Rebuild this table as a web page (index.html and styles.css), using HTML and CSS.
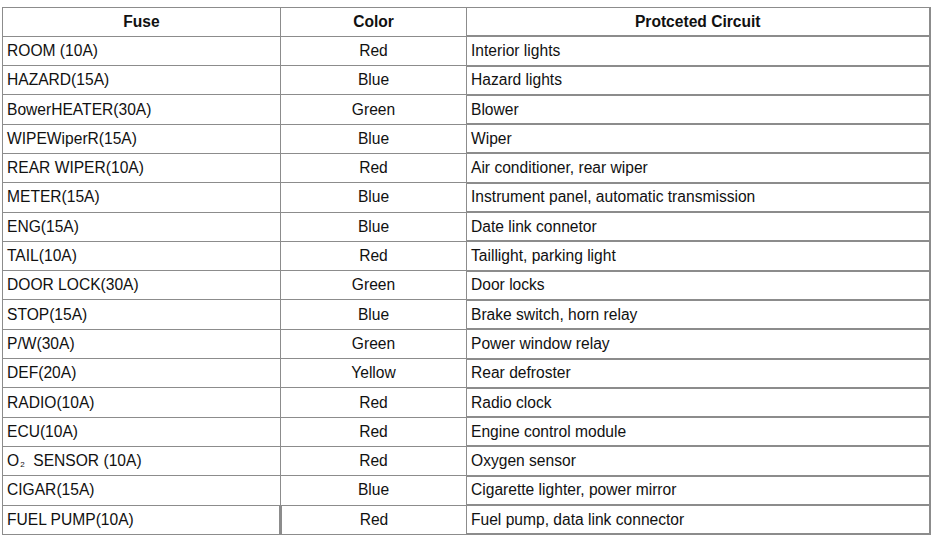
FILE: index.html
```html
<!DOCTYPE html>
<html>
<head>
<meta charset="utf-8">
<link rel="stylesheet" href="styles.css">
</head>
<body>
<table class="fuse-table">
  <colgroup>
    <col class="c1"><col class="c2"><col class="c3">
  </colgroup>
  <thead>
    <tr><th>Fuse</th><th>Color</th><th class="circ">Protceted Circuit</th></tr>
  </thead>
  <tbody>
    <tr><td>ROOM (10A)</td><td class="col">Red</td><td class="circ">Interior lights</td></tr>
    <tr><td>HAZARD(15A)</td><td class="col">Blue</td><td class="circ">Hazard lights</td></tr>
    <tr><td>BowerHEATER(30A)</td><td class="col">Green</td><td class="circ">Blower</td></tr>
    <tr><td>WIPEWiperR(15A)</td><td class="col">Blue</td><td class="circ">Wiper</td></tr>
    <tr><td>REAR WIPER(10A)</td><td class="col">Red</td><td class="circ">Air conditioner, rear wiper</td></tr>
    <tr><td>METER(15A)</td><td class="col">Blue</td><td class="circ">Instrument panel, automatic transmission</td></tr>
    <tr><td>ENG(15A)</td><td class="col">Blue</td><td class="circ">Date link connetor</td></tr>
    <tr><td>TAIL(10A)</td><td class="col">Red</td><td class="circ">Taillight, parking light</td></tr>
    <tr><td>DOOR LOCK(30A)</td><td class="col">Green</td><td class="circ">Door locks</td></tr>
    <tr><td>STOP(15A)</td><td class="col">Blue</td><td class="circ">Brake switch, horn relay</td></tr>
    <tr><td>P/W(30A)</td><td class="col">Green</td><td class="circ">Power window relay</td></tr>
    <tr><td>DEF(20A)</td><td class="col">Yellow</td><td class="circ">Rear defroster</td></tr>
    <tr><td>RADIO(10A)</td><td class="col">Red</td><td class="circ">Radio clock</td></tr>
    <tr><td>ECU(10A)</td><td class="col">Red</td><td class="circ">Engine control module</td></tr>
    <tr><td>O<span class="sub">2</span>&nbsp; SENSOR (10A)</td><td class="col">Red</td><td class="circ">Oxygen sensor</td></tr>
    <tr><td>CIGAR(15A)</td><td class="col">Blue</td><td class="circ">Cigarette lighter, power mirror</td></tr>
    <tr class="last"><td>FUEL PUMP(10A)</td><td class="col">Red</td><td class="circ">Fuel pump, data link connector</td></tr>
  </tbody>
</table>
</body>
</html>
```

FILE: styles.css
```css
html, body {
  margin: 0;
  padding: 0;
  background: #ffffff;
}
body {
  padding: 7px 0 0 2px;
  font-family: "Liberation Sans", Arial, sans-serif;
  font-size: 15.6px;
  color: #111111;
}
.fuse-table {
  border-collapse: collapse;
  table-layout: fixed;
  width: 927px;
}
.c1 { width: 278px; }
.c2 { width: 186px; }
.c3 { width: 463px; }
.fuse-table th,
.fuse-table td {
  border: 1px solid #8c8c8c;
  height: 27.3px;
  padding: 0 4px;
  line-height: 18px;
  white-space: nowrap;
  vertical-align: middle;
}
.fuse-table th {
  font-weight: bold;
  text-align: center;
}
.fuse-table td { text-align: left; }
.fuse-table td.col { text-align: center; }
.fuse-table td.circ,
.fuse-table th.circ {
  border-top: 2px solid #8c8c8c;
  border-bottom: 2px solid #8c8c8c;
  border-right: 2px solid #8c8c8c;
}
.fuse-table th.circ { border-top: 1px solid #8c8c8c; text-align: center; }
.fuse-table tr.last td:first-child { border-right: 3px solid #8c8c8c; }
.sub {
  font-size: 8px;
  line-height: 0;
  vertical-align: -1px;
  margin-left: 1px;
}
```
